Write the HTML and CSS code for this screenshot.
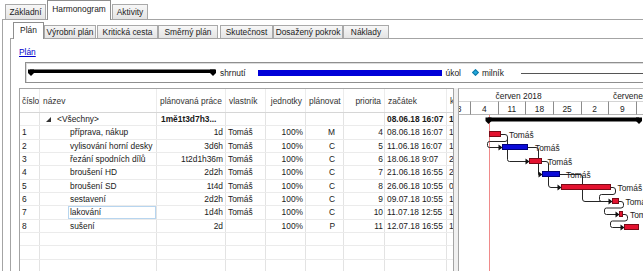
FILE: index.html
```html
<!DOCTYPE html>
<html lang="cs">
<head>
<meta charset="utf-8">
<title>Harmonogram</title>
<link rel="stylesheet" href="styles.css">
</head>
<body>
<div class="app">
  <div class="top-tabs">
    <div class="tab t-zakladni">Základní</div>
    <div class="tab active t-harm">Harmonogram</div>
    <div class="tab t-akt">Aktivity</div>
  </div>
  <div class="outer-panel">
    <div class="inner-tabs">
      <div class="tab active it-plan">Plán</div>
      <div class="tab it-vyr">Výrobní plán</div>
      <div class="tab it-krit">Kritická cesta</div>
      <div class="tab it-smer">Směrný plán</div>
      <div class="tab it-skut">Skutečnost</div>
      <div class="tab it-dos">Dosažený pokrok</div>
      <div class="tab it-nak">Náklady</div>
    </div>
    <div class="inner-panel">
      <a class="plan-link" href="#">Plán</a>
      <div class="legend">
        <svg class="lg-summary" width="190" height="9" viewBox="0 0 190 9">
          <rect x="2" y="1.5" width="185" height="3.5" fill="#000"/>
          <polygon points="0,1.5 6,1.5 6,5 3,8 0,5" fill="#000"/>
          <polygon points="182,1.5 188,1.5 188,5 185,8 182,5" fill="#000"/>
        </svg>
        <span class="lg-text lg-shrnuti">shrnutí</span>
        <span class="lg-task"></span>
        <span class="lg-text lg-ukol">úkol</span>
        <span class="lg-diamond"></span>
        <span class="lg-text lg-milnik">milník</span>
        <span class="lg-line"></span>
      </div>
      <div class="split">
        <div class="grid-wrap">
          <div class="grid">
            <div class="row head">
              <div class="c">číslo</div>
              <div class="c">název</div>
              <div class="c">plánovaná práce</div>
              <div class="c">vlastník</div>
              <div class="c r">jednotky</div>
              <div class="c r pl">plánovat</div>
              <div class="c r pr">priorita</div>
              <div class="c">začátek</div>
              <div class="c">konec</div>
            </div>
            <div class="row sum">
              <div class="c"></div>
              <div class="c nm-sum"><svg class="tri" width="5" height="5" viewBox="0 0 5 5"><polygon points="5,0 5,5 0,5" fill="#333"/></svg>&lt;Všechny&gt;</div>
              <div class="c b wk-sum">1mě1t3d7h3...</div>
              <div class="c"></div>
              <div class="c"></div>
              <div class="c"></div>
              <div class="c"></div>
              <div class="c b">08.06.18 16:07</div>
              <div class="c b">16.07.18 16:55</div>
            </div>
            <div class="row">
              <div class="c">1</div><div class="c nm"><span class="nm-in">příprava, nákup</span></div><div class="c r">1d</div><div class="c">Tomáš</div><div class="c r u">100%</div><div class="c r pl">M</div><div class="c r pr">4</div><div class="c">08.06.18 16:07</div><div class="c">11.06.18 16:07</div>
            </div>
            <div class="row">
              <div class="c">2</div><div class="c nm"><span class="nm-in">vylisování horní desky</span></div><div class="c r">3d6h</div><div class="c">Tomáš</div><div class="c r u">100%</div><div class="c r pl">C</div><div class="c r pr">5</div><div class="c">11.06.18 16:07</div><div class="c">18.06.18 9:07</div>
            </div>
            <div class="row">
              <div class="c">3</div><div class="c nm"><span class="nm-in">řezání spodních dílů</span></div><div class="c r">1t2d1h36m</div><div class="c">Tomáš</div><div class="c r u">100%</div><div class="c r pl">C</div><div class="c r pr">6</div><div class="c">18.06.18 9:07</div><div class="c">21.06.18 16:55</div>
            </div>
            <div class="row">
              <div class="c">4</div><div class="c nm"><span class="nm-in">broušení HD</span></div><div class="c r">2d2h</div><div class="c">Tomáš</div><div class="c r u">100%</div><div class="c r pl">C</div><div class="c r pr">7</div><div class="c">21.06.18 16:55</div><div class="c">26.06.18 10:55</div>
            </div>
            <div class="row">
              <div class="c">5</div><div class="c nm"><span class="nm-in">broušení SD</span></div><div class="c r">1t4d</div><div class="c">Tomáš</div><div class="c r u">100%</div><div class="c r pl">C</div><div class="c r pr">8</div><div class="c">26.06.18 10:55</div><div class="c">09.07.18 10:55</div>
            </div>
            <div class="row">
              <div class="c">6</div><div class="c nm"><span class="nm-in">sestavení</span></div><div class="c r">2d2h</div><div class="c">Tomáš</div><div class="c r u">100%</div><div class="c r pl">C</div><div class="c r pr">9</div><div class="c">09.07.18 10:55</div><div class="c">11.07.18 12:55</div>
            </div>
            <div class="row">
              <div class="c">7</div><div class="c nm"><span class="nm-in focus">lakování</span></div><div class="c r">1d4h</div><div class="c">Tomáš</div><div class="c r u">100%</div><div class="c r pl">C</div><div class="c r pr">10</div><div class="c">11.07.18 12:55</div><div class="c">12.07.18 16:55</div>
            </div>
            <div class="row">
              <div class="c">8</div><div class="c nm"><span class="nm-in">sušení</span></div><div class="c r">2d</div><div class="c"></div><div class="c r u">100%</div><div class="c r pl">P</div><div class="c r pr">11</div><div class="c">12.07.18 16:55</div><div class="c">16.07.18 16:55</div>
            </div>
            <div class="row"><div class="c"></div><div class="c"></div><div class="c"></div><div class="c"></div><div class="c"></div><div class="c"></div><div class="c"></div><div class="c"></div><div class="c"></div></div>
            <div class="row"><div class="c"></div><div class="c"></div><div class="c"></div><div class="c"></div><div class="c"></div><div class="c"></div><div class="c"></div><div class="c"></div><div class="c"></div></div>
            <div class="row"><div class="c"></div><div class="c"></div><div class="c"></div><div class="c"></div><div class="c"></div><div class="c"></div><div class="c"></div><div class="c"></div><div class="c"></div></div>
          </div>
        </div>
        <div class="splitter"></div>
        <div class="gantt">
          <svg class="gantt-svg" width="250" height="190" viewBox="0 0 250 190">
            <line x1="0" y1="12.5" x2="250" y2="12.5" class="g-hline"/>
            <line x1="0" y1="25.5" x2="250" y2="25.5" class="g-hline2"/>
            <text x="59.6" y="10" class="g-text" text-anchor="middle">červen 2018</text>
            <text x="154" y="10" class="g-text">červenec 2018</text>
            <g class="g-sep">
              <line x1="11.5" y1="12.5" x2="11.5" y2="25.5"/>
              <line x1="39.5" y1="12.5" x2="39.5" y2="25.5"/>
              <line x1="66.5" y1="12.5" x2="66.5" y2="25.5"/>
              <line x1="94.5" y1="12.5" x2="94.5" y2="25.5"/>
              <line x1="122.5" y1="12.5" x2="122.5" y2="25.5"/>
              <line x1="149.5" y1="12.5" x2="149.5" y2="25.5"/>
              <line x1="177.5" y1="12.5" x2="177.5" y2="25.5"/>
              <line x1="205.5" y1="12.5" x2="205.5" y2="25.5"/>
            </g>
            <text x="-2.3" y="22.5" class="g-text" text-anchor="middle">28</text>
            <text x="25.3" y="22.5" class="g-text" text-anchor="middle">4</text>
            <text x="52.9" y="22.5" class="g-text" text-anchor="middle">11</text>
            <text x="80.5" y="22.5" class="g-text" text-anchor="middle">18</text>
            <text x="108.1" y="22.5" class="g-text" text-anchor="middle">25</text>
            <text x="135.7" y="22.5" class="g-text" text-anchor="middle">2</text>
            <text x="163.3" y="22.5" class="g-text" text-anchor="middle">9</text>
            <text x="190.9" y="22.5" class="g-text" text-anchor="middle">16</text>

            <line x1="30.5" y1="26" x2="30.5" y2="190" class="g-today"/>

            <g class="g-conn">
              <path d="M42,45.5 H46 Q48.5,45.5 48.5,48 V50 Q48.5,52.5 46,52.5 H30.5 Q28.5,52.5 28.5,54.5 V56.5 Q28.5,58.5 30.5,58.5 H40"/>
              <path d="M48.5,48 V70.5 Q48.5,72.5 50.5,72.5 H67"/>
              <path d="M69,58.5 H77 Q79.5,58.5 79.5,61 V85.5 H80"/>
              <path d="M83,72.5 H87 Q89.5,72.5 89.5,75 V96 Q89.5,98.5 92,98.5 H99"/>
              <path d="M101,85.5 H121 Q123.5,85.5 123.5,88 V110 Q123.5,112.5 126,112.5 H150"/>
              <path d="M152,98.5 H154 Q156.5,98.5 156.5,101 V103 Q156.5,105.5 154,105.5 H142.5 Q140.5,105.5 140.5,107.5 V110.5 Q140.5,112.5 142.5,112.5 H150"/>
              <path d="M160,112.5 H162 Q164.5,112.5 164.5,115 V116.5 Q164.5,119 162,119 H147.5 Q145.5,119 145.5,121 V123.5 Q145.5,125.5 147.5,125.5 H157"/>
              <path d="M164,125.5 H166 Q168.5,125.5 168.5,128 V129.5 Q168.5,132 166,132 H153.5 Q151.5,132 151.5,134 V136.5 Q151.5,138.5 153.5,138.5 H162"/>
            </g>
            <g class="g-arrow">
              <polygon points="39.5,55.5 43.5,58.5 39.5,61.5"/>
              <polygon points="66.5,69.5 70.5,72.5 66.5,75.5"/>
              <polygon points="79.5,82.5 83.5,85.5 79.5,88.5"/>
              <polygon points="98.5,95.5 102.5,98.5 98.5,101.5"/>
              <polygon points="149.5,109.5 153.5,112.5 149.5,115.5"/>
              <polygon points="156.5,122.5 160.5,125.5 156.5,128.5"/>
              <polygon points="161.5,135.5 165.5,138.5 161.5,141.5"/>
            </g>

            <rect x="29" y="28.5" width="151" height="4" fill="#000"/>
            <polygon points="26.5,28.5 32.5,28.5 32.5,32 29.5,35 26.5,32" fill="#000"/>
            <polygon points="177,28.5 183,28.5 183,32 180,35 177,32" fill="#000"/>

            <rect x="30.5" y="42.5" width="11" height="5" class="g-red"/>
            <rect x="43.5" y="55.5" width="25" height="5" class="g-blue"/>
            <rect x="70.5" y="69.5" width="12" height="5" class="g-red"/>
            <rect x="83.5" y="82.5" width="17" height="5" class="g-blue"/>
            <rect x="102.5" y="95.5" width="49" height="5" class="g-red"/>
            <rect x="153.5" y="109.5" width="6" height="5" class="g-red"/>
            <rect x="160.5" y="122.5" width="3" height="5" class="g-red"/>
            <rect x="165.5" y="135.5" width="14" height="5" class="g-red"/>

            <text x="50" y="48.5" class="g-text">Tomáš</text>
            <text x="76" y="61.5" class="g-text">Tomáš</text>
            <text x="88.5" y="75.5" class="g-text">Tomáš</text>
            <text x="107" y="88.5" class="g-text">Tomáš</text>
            <text x="158.5" y="101.5" class="g-text">Tomáš</text>
            <text x="166.5" y="115.5" class="g-text">Tomáš</text>
            <text x="171" y="128.5" class="g-text">Tomáš</text>
          </svg>
        </div>
      </div>
    </div>
  </div>
</div>
</body>
</html>
```

FILE: styles.css
```css
* { box-sizing: border-box; }
html, body { margin: 0; padding: 0; background: #fff; }
body {
  width: 643px;
  height: 271px;
  overflow: hidden;
  font-family: "Liberation Sans", Arial, sans-serif;
  font-size: 8.4px;
  color: #1a1a1a;
}
.app { width: 720px; }

/* tabs */
.top-tabs { display: flex; align-items: flex-end; height: 19px; }
.inner-tabs { display: flex; align-items: flex-end; height: 18px; }
.tab {
  text-align: center;
  white-space: nowrap;
  border: 1px solid #a9a9a9;
  border-bottom: none;
  background: linear-gradient(#f7f7f7, #e4e4e4);
  color: #222;
}
.top-tabs .tab { height: 15px; line-height: 14px; }
.inner-tabs .tab { height: 13px; line-height: 12px; }
.tab.active {
  background: #fff;
  border-color: #8e8e8e;
  position: relative;
  z-index: 1;
  margin-bottom: -1px;
}
.top-tabs .tab.active { height: 20px; line-height: 17px; }
.inner-tabs .tab.active { height: 17px; line-height: 14px; }

.t-zakladni { margin-left: 5px; width: 41px; }
.t-harm { margin-left: 1px; width: 64px; }
.t-akt { margin-left: 1px; width: 36px; }

.it-plan { margin-left: 10px; width: 31px; }
.it-vyr { width: 52px; }
.it-krit { margin-left: 1px; width: 61px; }
.it-smer { width: 60px; }
.it-skut { margin-left: 2px; width: 53px; }
.it-dos { width: 70px; }
.it-nak { width: 46px; }

.outer-panel {
  margin-left: 2px;
  border-left: 1px solid #a4a4a4;
  border-top: 1px solid #a4a4a4;
}
.inner-panel {
  margin-left: 7px;
  border-left: 1px solid #a4a4a4;
  border-top: 1px solid #a4a4a4;
  height: 260px;
}

.plan-link {
  display: block;
  width: max-content;
  margin: 7px 0 0 8px;
  height: 12px;
  line-height: 12px;
  color: #0000cc;
  text-decoration: underline;
}

/* legend */
.legend {
  margin: 4px 0 0 14px;
  width: 660px;
  height: 21px;
  border: 1px solid #8f8f8f;
  box-shadow: inset 1px 1px 0 #dcdcdc;
  display: flex;
  align-items: center;
  padding-left: 2px;
}
.lg-summary { display: block; flex: none; }
.lg-text { white-space: nowrap; color: #222; line-height: 10px; }
.lg-shrnuti { margin-left: 2px; }
.lg-task {
  flex: none;
  width: 184px;
  height: 6px;
  background: #0000d8;
  margin-left: 12px;
}
.lg-ukol { margin-left: 4px; }
.lg-diamond {
  flex: none;
  width: 5px;
  height: 5px;
  background: #1fa8dc;
  border: 1px solid #147aa8;
  transform: rotate(45deg);
  margin-left: 12px;
}
.lg-milnik { margin-left: 4px; }
.lg-line {
  flex: 1;
  height: 1px;
  background: #555;
  margin-left: 17px;
  margin-top: 1px;
}

/* split view */
.split {
  display: flex;
  align-items: flex-start;
  margin: 5px 0 0 8px;
  height: 190px;
}
.grid-wrap {
  flex: none;
  width: 435px;
  height: 190px;
  overflow: hidden;
  border-left: 1px solid #a4a4a4;
  border-right: 1px solid #a4a4a4;
  border-top: 1px solid #a4a4a4;
}
.grid { width: max-content; }
.row {
  display: grid;
  grid-template-columns: 20px 117px 69px 40px 40px 38px 41px 62px 80px;
  height: 13.33px;
  border-bottom: 1px solid #ebebeb;
}
.row.head {
  height: 24px;
  border-bottom-color: #d6d6d6;
  color: #333;
}
.c {
  border-right: 1px solid #e3e3e3;
  padding: 0 2px;
  white-space: nowrap;
  overflow: hidden;
  line-height: 12.33px;
}
.head .c { line-height: 24px; padding: 0 3px; border-right-color: #ececec; }
.head .c:first-child { padding-left: 2px; }
.r { text-align: right; }
.c.pl { padding-right: 8px; }
.c.pr { padding-right: 1px; }
.head .c.pr { padding-right: 3px; }
.c.u { padding-right: 2px; }
.b { font-weight: bold; }
.wk-sum { padding-left: 4px; }
.nm-sum { padding-left: 6px; }
.tri { display: inline-block; margin-right: 6px; vertical-align: 0; }
.nm { padding-left: 28px; padding-right: 0; }
.nm-in {
  display: block;
  height: 100%;
  padding-left: 1px;
  border: 1px solid transparent;
  line-height: 10.33px;
}
.nm-in.focus { border-color: #b7d5ef; }

.splitter {
  flex: none;
  width: 4px;
  height: 190px;
  background: #f0f0f0;
}
.gantt {
  flex: none;
  width: 250px;
  height: 190px;
  border-left: 1px solid #a4a4a4;
  border-top: 1px solid #c4c4c4;
  overflow: hidden;
}
.gantt-svg { display: block; }
.g-text {
  font-family: "Liberation Sans", Arial, sans-serif;
  font-size: 8.4px;
  fill: #222;
}
.g-hline { stroke: #d4d4d4; stroke-width: 1; }
.g-hline2 { stroke: #b4b4b4; stroke-width: 1; }
.g-sep line { stroke: #8c8c8c; stroke-width: 1; }
.g-today { stroke: #f08a8a; stroke-width: 1; }
.g-conn path { fill: none; stroke: #262626; stroke-width: 1; }
.g-arrow polygon { fill: #111; }
.g-red { fill: #e3122f; stroke: #7a0a16; stroke-width: 1; }
.g-blue { fill: #0b0bd8; stroke: #00007a; stroke-width: 1; }
```
